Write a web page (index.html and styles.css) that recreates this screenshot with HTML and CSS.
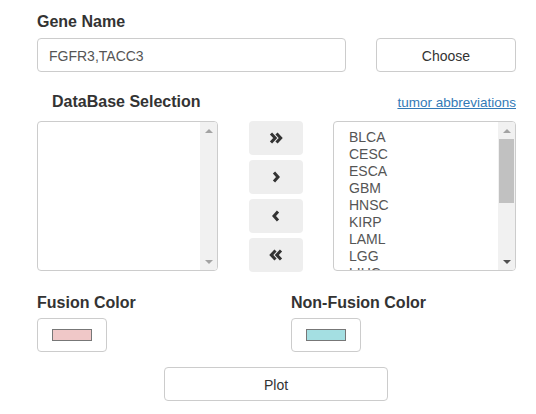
FILE: index.html
```html
<!DOCTYPE html>
<html lang="en">
<head>
    <meta charset="UTF-8">
    <meta name="viewport" content="width=device-width, initial-scale=1.0">
    <title>Fusion Plot</title>
    <link rel="stylesheet" href="styles.css">
</head>
<body>

    <div class="panel">
        <label class="field-label">Gene Name</label>
        <div class="gene-row">
            <input type="text" class="gene-input" value="FGFR3,TACC3">
            <button class="btn choose-btn">Choose</button>
        </div>

        <div class="db-header">
            <span class="field-label db-label">DataBase Selection</span>
            <a href="#" class="abbr-link">tumor abbreviations</a>
        </div>

        <div class="db-row">
            <div class="listbox left-list">
                <div class="list-items"></div>
                <div class="scrollbar">
                    <span class="arrow up"></span>
                    <span class="track"></span>
                    <span class="arrow down"></span>
                </div>
            </div>

            <div class="move-btns">
                <button class="move-btn">
                    <svg width="14" height="12" viewBox="0 0 14 12"><polyline points="2,1.5 6.2,6 2,10.5"/><polyline points="7.5,1.5 11.7,6 7.5,10.5"/></svg>
                </button>
                <button class="move-btn">
                    <svg width="8" height="12" viewBox="0 0 8 12"><polyline points="2,1.5 6,6 2,10.5"/></svg>
                </button>
                <button class="move-btn">
                    <svg width="8" height="12" viewBox="0 0 8 12"><polyline points="6,1.5 2,6 6,10.5"/></svg>
                </button>
                <button class="move-btn">
                    <svg width="14" height="12" viewBox="0 0 14 12"><polyline points="6.5,1.5 2.3,6 6.5,10.5"/><polyline points="12,1.5 7.8,6 12,10.5"/></svg>
                </button>
            </div>

            <div class="listbox right-list">
                <ul class="list-items">
                    <li>BLCA</li>
                    <li>CESC</li>
                    <li>ESCA</li>
                    <li>GBM</li>
                    <li>HNSC</li>
                    <li>KIRP</li>
                    <li>LAML</li>
                    <li>LGG</li>
                    <li>LIHC</li>
                </ul>
                <div class="scrollbar">
                    <span class="arrow up"></span>
                    <span class="track"><span class="thumb"></span></span>
                    <span class="arrow down active"></span>
                </div>
            </div>
        </div>

        <div class="color-row">
            <div class="color-field">
                <label class="field-label">Fusion Color</label>
                <button class="btn color-btn"><span class="swatch fusion"></span></button>
            </div>
            <div class="color-field">
                <label class="field-label">Non-Fusion Color</label>
                <button class="btn color-btn"><span class="swatch non-fusion"></span></button>
            </div>
        </div>

        <div class="plot-row">
            <button class="btn plot-btn">Plot</button>
        </div>
    </div>

</body>
</html>
```

FILE: styles.css
```css
body {
    margin: 0;
    font-family: "Liberation Sans", Arial, sans-serif;
    color: #333;
    background: #fff;
}
.panel {
    width: 479px;
    padding: 12px 0 0 37px;
}
.field-label {
    display: block;
    font-size: 16px;
    font-weight: bold;
    line-height: 20px;
    color: #333;
}
.gene-row {
    display: flex;
    justify-content: space-between;
    margin-top: 6px;
}
.gene-input {
    box-sizing: border-box;
    width: 309px;
    height: 34px;
    padding: 2px 11px 0;
    border: 1px solid #ccc;
    border-radius: 4px;
    font-family: inherit;
    font-size: 14px;
    color: #555;
}
.btn {
    box-sizing: border-box;
    height: 34px;
    border: 1px solid #ccc;
    border-radius: 4px;
    background: #fff;
    font-family: inherit;
    font-size: 14px;
    color: #333;
    padding: 2px 0 0;
}
.choose-btn {
    width: 140px;
}
.db-header {
    display: flex;
    justify-content: space-between;
    align-items: baseline;
    margin-top: 20px;
}
.db-label {
    padding-left: 15px;
}
.abbr-link {
    font-size: 13.5px;
    color: #337ab7;
    text-decoration: underline;
}
.db-row {
    display: flex;
    align-items: flex-start;
    margin-top: 9px;
    height: 151px;
}
.listbox {
    box-sizing: border-box;
    display: flex;
    height: 150px;
    border: 1px solid #ccc;
    border-radius: 4px;
    overflow: hidden;
}
.left-list {
    width: 181px;
}
.right-list {
    width: 183px;
    margin-left: 30px;
}
.list-items {
    flex: 1;
    margin: 0;
    padding: 7px 0 0 15px;
    list-style: none;
    overflow: hidden;
    font-size: 14px;
    line-height: 17px;
    color: #555;
}
.scrollbar {
    display: flex;
    flex-direction: column;
    width: 17px;
    background: #f1f1f1;
}
.arrow {
    height: 17px;
    display: flex;
    align-items: center;
    justify-content: center;
}
.arrow::after {
    content: "";
    border-left: 4px solid transparent;
    border-right: 4px solid transparent;
}
.arrow.up::after {
    border-bottom: 4px solid #a3a3a3;
}
.arrow.down::after {
    border-top: 4px solid #a3a3a3;
}
.arrow.down.active::after {
    border-top-color: #505050;
}
.track {
    flex: 1;
    padding: 0 1px;
}
.thumb {
    display: block;
    height: 64px;
    background: #c1c1c1;
}
.move-btns {
    display: flex;
    flex-direction: column;
    gap: 5px;
    margin-left: 31px;
}
.move-btn {
    width: 54px;
    height: 34px;
    border: none;
    border-radius: 4px;
    background: #eee;
    padding: 0;
    display: flex;
    align-items: center;
    justify-content: center;
}
.move-btn svg polyline {
    fill: none;
    stroke: #333;
    stroke-width: 3;
    stroke-linecap: butt;
    stroke-linejoin: miter;
}
.color-row {
    display: grid;
    grid-template-columns: 254px 1fr;
    margin-top: 21px;
}
.color-btn {
    display: flex;
    align-items: center;
    justify-content: center;
    width: 70px;
    margin-top: 5px;
    padding: 0;
}
.swatch {
    box-sizing: border-box;
    width: 40px;
    height: 12px;
    border: 1px solid #777;
}
.swatch.fusion {
    background: #f0c8c8;
}
.swatch.non-fusion {
    background: #a4dfe2;
}
.plot-row {
    display: flex;
    justify-content: center;
    margin-top: 15px;
    padding-right: 1px;
}
.plot-btn {
    width: 224px;
}
```
